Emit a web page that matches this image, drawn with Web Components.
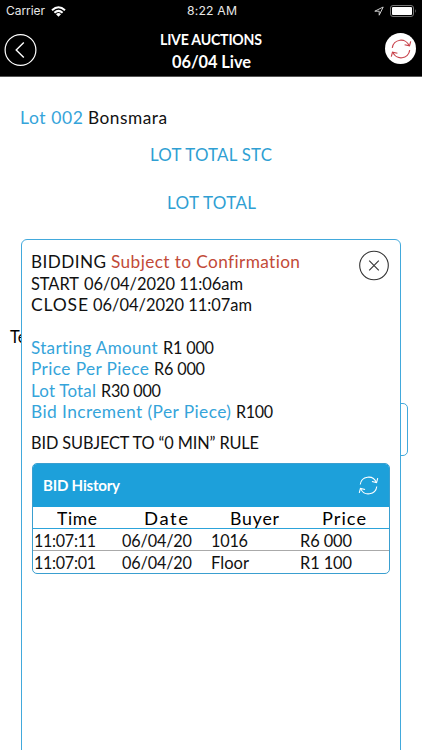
<!DOCTYPE html>
<html lang="en">
<head>
<meta charset="utf-8">
<title>Live Auctions</title>
<style>
  html, body {
    margin: 0;
    height: 100%;
    overflow: hidden;
    background: #fff;
  }
</style>
</head>
<body>
<auction-app></auction-app>

<script>
/**
 * Builds a template from markup.
 */
const createTemplate = (html) => {
  const template = document.createElement('template')
  template.innerHTML = html
  return template
}

/*
 * Base class, clones the template of the element into its shadow root.
 */
class BaseElement extends HTMLElement {
  constructor () {
    super()
    this.attachShadow({ mode: 'open' })
      .appendChild(this.constructor.template.content.cloneNode(true))
  }
}

/*
 * Text widened to the w attribute, half by glyph width and half by tracking.
 */
customElements.define('tracked-text',
  class extends BaseElement {
    static template = createTemplate(`
      <style>
        :host {
          display: inline-block;
          white-space: nowrap;
          text-align: left;
          flex: none;
        }
        span {
          display: inline-block;
          transform-origin: left;
        }
      </style>
      <span><slot></slot></span>
    `)

    connectedCallback () {
      const width = Number(this.getAttribute('w'))
      const span = this.shadowRoot.querySelector('span')
      const length = this.textContent.length
      const natural = span.getBoundingClientRect().width
      const scale = Math.sqrt(width / natural)
      this.style.width = `${width}px`
      span.style.transform = `scaleX(${scale})`
      span.style.letterSpacing = `${(width / scale - natural) / (length - 1)}px`
    }
  }
)

customElements.define('refresh-icon',
  class extends BaseElement {
    static template = createTemplate(`
      <style>
        :host {
          display: block;
          width: 20px;
          height: 20px;
        }
        svg {
          display: block;
          width: 100%;
          height: 100%;
          overflow: visible;
        }
      </style>
      <svg viewBox="0 0 20 20" fill="none" stroke="currentColor" stroke-width="1.15">
        <path d="M1.3 8.9A8.8 8.8 0 0 1 18.2 6.7M18.7 11.1A8.8 8.8 0 0 1 1.8 13.3"/>
        <path d="M13.6 5.8L18.5 6.9L19.7 2.3M6.4 14.2L1.5 13.1L.3 17.7"/>
      </svg>
    `)
  }
)

customElements.define('status-bar',
  class extends BaseElement {
    static template = createTemplate(`
      <style>
        :host {
          display: grid;
          grid-template-columns: 1fr auto 1fr;
          align-items: center;
          height: 22px;
          padding: 0 5px 0 6px;
          font: 12px/22px Inter, sans-serif;
          color: #e8e8e8;
        }
        div {
          display: flex;
          align-items: center;
        }
        .left { gap: 6px; }
        .right {
          justify-content: flex-end;
          gap: 6px;
        }
        svg { display: block; }
      </style>
      <div class="left">
        <tracked-text w="39">Carrier</tracked-text>
        <svg width="15" height="11" viewBox="0 0 15 11" fill="none" stroke="#fff" stroke-width="2">
          <path d="M1 4.3Q7.5-1.7 14 4.3M3.4 6.7Q7.5 3 11.6 6.7"/>
          <path d="M5 8.2Q7.5 6 10 8.2L7.5 10.8Z" fill="#fff" stroke="none"/>
        </svg>
      </div>
      <tracked-text w="50">8:22 AM</tracked-text>
      <div class="right">
        <svg width="10" height="10" viewBox="0 0 10 10" fill="none" stroke="#ccc" stroke-width="1">
          <path d="M.8 5.2L9.2 1L5.2 9.2V5.2Z"/>
        </svg>
        <svg width="27" height="12" viewBox="0 0 27 12">
          <rect x=".5" y=".5" width="23" height="11" rx="2.5" fill="none" stroke="#777"/>
          <rect x="2" y="2" width="20" height="8" rx="1" fill="#fff"/>
          <path d="M25 4Q26.6 6 25 8Z" fill="#777"/>
        </svg>
      </div>
    `)
  }
)

customElements.define('app-header',
  class extends BaseElement {
    static template = createTemplate(`
      <style>
        :host {
          display: block;
          height: 77px;
          background: #000;
          border-bottom: 1px solid #555;
          box-sizing: border-box;
          color: #fff;
        }
        .bar {
          display: flex;
          justify-content: space-between;
          align-items: center;
          height: 54px;
          padding: 0 6px 0 4px;
        }
        .title {
          display: flex;
          flex-direction: column;
          align-items: center;
          padding-top: 3px;
          font-weight: 700;
          font-size: 14.5px;
          line-height: 23px;
        }
        .large { font-size: 16.5px; }
        .refresh {
          display: grid;
          place-items: center;
          width: 31px;
          height: 31px;
          margin-bottom: 1px;
          border-radius: 50%;
          background: #fff;
          color: #c8414a;
        }
        svg { display: block; }
      </style>
      <status-bar></status-bar>
      <div class="bar">
        <svg width="33" height="33" viewBox="0 0 33 33" fill="none" stroke="#fff">
          <circle cx="16.5" cy="17" r="15.4" stroke-width="1.2"/>
          <path d="M19.8 9.5L12.2 17L19.8 24.6" stroke-width="1.4"/>
        </svg>
        <div class="title">
          <tracked-text w="102">LIVE AUCTIONS</tracked-text>
          <tracked-text class="large" w="79">06/04 Live</tracked-text>
        </div>
        <div class="refresh"><refresh-icon></refresh-icon></div>
      </div>
    `)
  }
)

/*
 * A label and its value on one line.
 */
customElements.define('info-line',
  class extends BaseElement {
    static template = createTemplate(`
      <style>
        :host {
          display: flex;
          gap: 4.5px;
          height: 21.5px;
          line-height: 21.5px;
        }
      </style>
      <slot></slot>
    `)
  }
)

customElements.define('bid-history',
  class extends BaseElement {
    static template = createTemplate(`
      <style>
        :host {
          display: block;
          box-sizing: border-box;
          width: 358px;
          height: 111px;
          border: 1px solid #3a9fd0;
          border-radius: 5px;
          overflow: hidden;
          background: #fff;
          color: #111;
        }
        header {
          display: flex;
          align-items: center;
          justify-content: space-between;
          height: 43px;
          padding: 0 11px 0 10px;
          background: #1da0da;
          color: #fff;
          font-size: 15.5px;
          font-weight: 700;
        }
        refresh-icon { width: 19px; height: 19px; }
        .row {
          display: grid;
          grid-template-columns: 88px 89px 89px 1fr;
          height: 21px;
          line-height: 24px;
          border-bottom: 1px solid #aaa;
          padding-left: 1px;
        }
        .head {
          border-bottom: 1.5px solid #2ca3da;
          justify-items: center;
          color: #000;
          padding-left: 0;
        }
        .row:last-child { border: 0; }
      </style>
      <header>
        <tracked-text w="77">BID History</tracked-text>
        <refresh-icon></refresh-icon>
      </header>
      <div class="row head">
        <tracked-text w="40">Time</tracked-text>
        <tracked-text w="44">Date</tracked-text>
        <tracked-text w="49">Buyer</tracked-text>
        <tracked-text w="44">Price</tracked-text>
      </div>
      <div class="row">
        <tracked-text w="62">11:07:11</tracked-text>
        <tracked-text w="70">06/04/20</tracked-text>
        <tracked-text w="37">1016</tracked-text>
        <tracked-text w="52">R6 000</tracked-text>
      </div>
      <div class="row">
        <tracked-text w="62">11:07:01</tracked-text>
        <tracked-text w="70">06/04/20</tracked-text>
        <tracked-text w="38">Floor</tracked-text>
        <tracked-text w="52">R1 100</tracked-text>
      </div>
    `)
  }
)

customElements.define('bidding-panel',
  class extends BaseElement {
    static template = createTemplate(`
      <style>
        :host {
          display: block;
          box-sizing: border-box;
          padding: 12px 10px 0 9px;
          border: 1px solid #42a9dc;
          border-radius: 6px;
          background: #fff;
          color: #111;
        }
        .top {
          display: flex;
          justify-content: space-between;
          height: 64.5px;
          margin-bottom: 21px;
        }
        .blue { color: #35a4da; }
        .red { color: #c24a38; }
        .rule { margin: 9.5px 0 8px; }
        bid-history { margin-left: 1px; }
        svg {
          display: block;
          overflow: visible;
        }
      </style>
      <div class="top">
        <div>
          <info-line><tracked-text w="75">BIDDING</tracked-text><tracked-text class="red" w="189">Subject to Confirmation</tracked-text></info-line>
          <info-line><tracked-text w="48">START</tracked-text><tracked-text w="159">06/04/2020 11:06am</tracked-text></info-line>
          <info-line><tracked-text w="57">CLOSE</tracked-text><tracked-text w="159">06/04/2020 11:07am</tracked-text></info-line>
        </div>
        <svg width="31" height="31" viewBox="0 0 31 31" fill="none" stroke="#333">
          <circle cx="15" cy="13.5" r="14.3" stroke-width="1.1"/>
          <path d="M10.2 8.7L19.8 18.3M19.8 8.7L10.2 18.3" stroke-width="1.1"/>
        </svg>
      </div>
      <info-line><tracked-text class="blue" w="127">Starting Amount</tracked-text><tracked-text w="51">R1 000</tracked-text></info-line>
      <info-line><tracked-text class="blue" w="118">Price Per Piece</tracked-text><tracked-text w="51">R6 000</tracked-text></info-line>
      <info-line><tracked-text class="blue" w="65">Lot Total</tracked-text><tracked-text w="60">R30 000</tracked-text></info-line>
      <info-line><tracked-text class="blue" w="200">Bid Increment (Per Piece)</tracked-text><tracked-text w="37">R100</tracked-text></info-line>
      <info-line class="rule"><tracked-text w="228">BID SUBJECT TO “0 MIN” RULE</tracked-text></info-line>
      <bid-history></bid-history>
    `)
  }
)

customElements.define('auction-app',
  class extends BaseElement {
    static template = createTemplate(`
      <style>
        :host {
          display: block;
          position: relative;
          width: 422px;
          height: 750px;
          overflow: hidden;
          background: #fff;
          font: 16.5px/22px Lato, sans-serif;
          color: #111;
        }
        .lot { padding: 31px 0 0 20px; }
        .total {
          display: flex;
          justify-content: center;
          color: #2f9fd3;
        }
        .total.stc { margin-top: 14.5px; }
        .total.lone { margin-top: 26px; }
        .blue { color: #35a4da; }
        .terms {
          padding: 112px 0 0 10px;
          color: #000;
        }
        .field {
          box-sizing: border-box;
          width: 386px;
          height: 53px;
          margin: 55px 0 0 22px;
          border: 1px solid #42a9dc;
          border-radius: 5px;
        }
        /* popup above the lot page */
        bidding-panel {
          position: absolute;
          left: 21px;
          top: 239px;
          width: 380px;
          height: 530px;
        }
      </style>
      <app-header></app-header>
      <info-line class="lot"><tracked-text class="blue" w="63">Lot 002</tracked-text><tracked-text w="79">Bonsmara</tracked-text></info-line>
      <div class="total stc"><tracked-text w="122">LOT TOTAL STC</tracked-text></div>
      <div class="total lone"><tracked-text w="89">LOT TOTAL</tracked-text></div>
      <div class="terms">Te</div>
      <div class="field"></div>
      <bidding-panel></bidding-panel>
    `)
  }
)
</script>
</body>
</html>
